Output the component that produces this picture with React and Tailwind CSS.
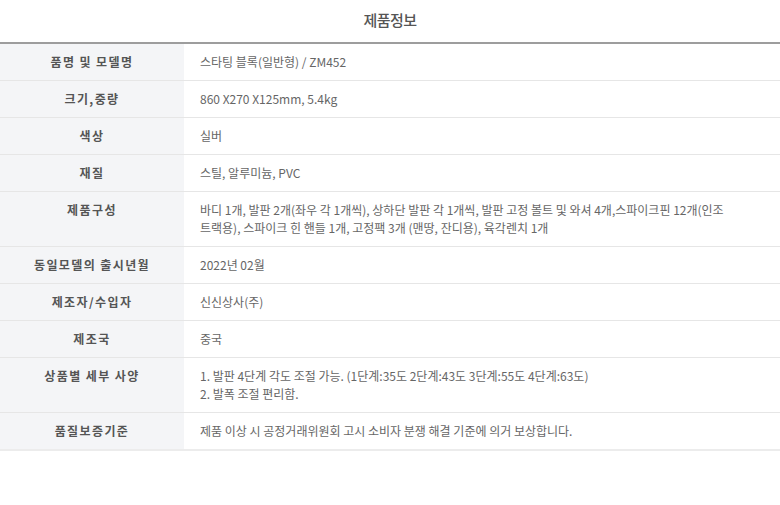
import React from "react";

const rows = [
  { label: "품명 및 모델명", value: ["스타팅 블록(일반형) / ZM452"] },
  { label: "크기,중량", value: ["860 X270 X125mm, 5.4kg"] },
  { label: "색상", value: ["실버"] },
  { label: "재질", value: ["스틸, 알루미늄, PVC"] },
  {
    label: "제품구성",
    value: [
      "바디 1개, 발판 2개(좌우 각 1개씩), 상하단 발판 각 1개씩, 발판 고정 볼트 및 와셔 4개,스파이크핀 12개(인조",
      "트랙용), 스파이크 힌 핸들 1개, 고정팩 3개 (맨땅, 잔디용), 육각렌치 1개",
    ],
  },
  { label: "동일모델의 출시년월", value: ["2022년 02월"] },
  { label: "제조자/수입자", value: ["신신상사(주)"] },
  { label: "제조국", value: ["중국"] },
  {
    label: "상품별 세부 사양",
    value: [
      "1. 발판 4단계 각도 조절 가능. (1단계:35도 2단계:43도 3단계:55도 4단계:63도)",
      "2. 발폭 조절 편리함.",
    ],
  },
  { label: "품질보증기준", value: ["제품 이상 시 공정거래위원회 고시 소비자 분쟁 해결 기준에 의거 보상합니다."] },
];

export default function App() {
  return (
    <div className="w-[780px] h-[505px] bg-white font-['Noto_Sans_CJK_KR','Noto_Sans',sans-serif]">
      <h2 className="h-[42px] pb-px flex items-center justify-center text-[15px] font-medium text-[#555] tracking-[-0.5px]">
        제품정보
      </h2>
      <div className="border-t-2 border-[#9d9d9d]">
        {rows.map((row, i) => (
          <div
            key={i}
            className={`flex text-[12px] leading-[18px] ${
              i === rows.length - 1 ? "border-b-2 border-[#ececec]" : "border-b border-[#e6e6e6]"
            }`}
          >
            <div className="w-[184px] shrink-0 bg-[#f4f5f7] py-[9px] text-center font-bold text-[#555] tracking-[1.4px]">
              {row.label}
            </div>
            <div className="flex-1 py-[9px] pl-4 pr-2 text-[#666]">
              {row.value.map((line, j) => (
                <div key={j} className="whitespace-nowrap">
                  {line}
                </div>
              ))}
            </div>
          </div>
        ))}
      </div>
    </div>
  );
}
